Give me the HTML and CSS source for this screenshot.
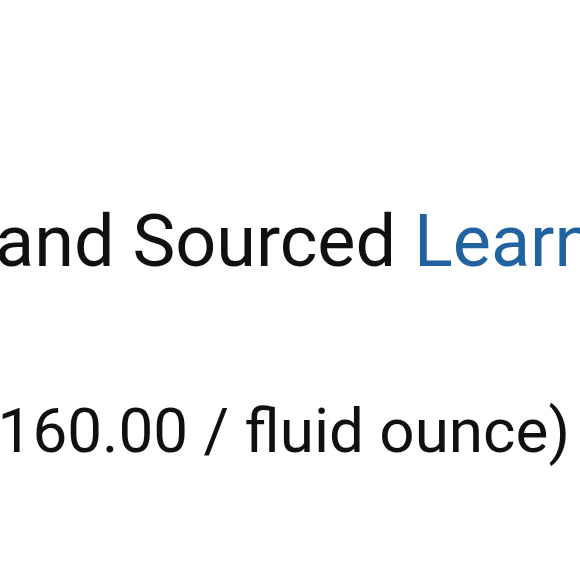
FILE: index.html
```html
<!DOCTYPE html>
<html>
<head>
<meta charset="utf-8">
<link rel="stylesheet" href="styles.css">
</head>
<body>
<div class="view">
  <div class="line badge">
    <div class="lead"><span>Responsibly Grown and Sourced </span></div>
    <a class="link" href="#">Learn more</a>
  </div>
  <div class="line price"><span>($160.00 / fluid ounce)</span></div>
</div>
</body>
</html>
```
FILE: styles.css
```css
html, body {
  margin: 0;
  padding: 0;
  background: #ffffff;
}
.view {
  width: 580px;
  height: 580px;
  overflow: hidden;
  font-family: Roboto, "Noto Sans", sans-serif;
  color: #0f1111;
}
.line {
  white-space: pre;
  line-height: 1;
}
.badge {
  display: flex;
  width: 580px;
  margin-top: 206px;
  font-size: 72px;
}
.lead {
  flex: 0 0 414px;
  min-width: 0;
  display: flex;
  justify-content: flex-end;
}
.lead span {
  flex: 0 0 auto;
}
.link {
  flex: 0 0 auto;
  color: #2162a1;
  text-decoration: none;
}
.price {
  display: flex;
  justify-content: flex-end;
  width: 570px;
  margin-top: 122px;
  font-size: 62px;
}
.price span {
  flex: 0 0 auto;
}
```
